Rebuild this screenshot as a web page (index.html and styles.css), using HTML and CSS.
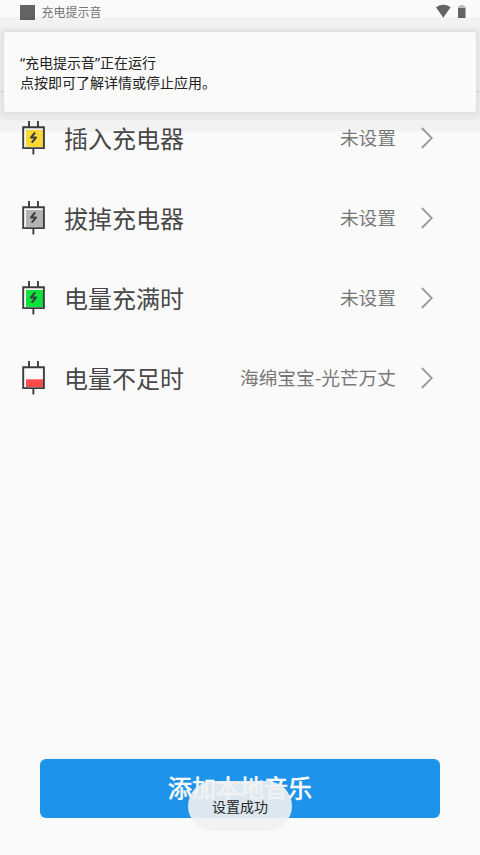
FILE: index.html
```
<!DOCTYPE html>
<html lang="zh-CN">
<head>
<meta charset="utf-8">
<title>充电提示音</title>
<link rel="stylesheet" href="styles.css">
</head>
<body>
<svg width="0" height="0" class="defs">
  <symbol id="plug" viewBox="0 0 24 34">
    <path d="M7 0V6M16 0V6M11.400 27V33.500M1.200 6.200H21.900V27.100H1.200Z" fill="none" stroke="#3d3d3f" stroke-width="1.900"/>
  </symbol>
  <symbol id="bolt" viewBox="0 0 24 34">
    <path d="M13.100 11.500L8.900 16.600H14L9.700 21.700" fill="none" stroke="#3d3d3f" stroke-width="2" stroke-linejoin="round"/>
  </symbol>
  <symbol id="chevron" viewBox="0 0 12 22">
    <path d="M0.800 1L10.800 11L0.800 21" fill="none" stroke="#9a9a9a" stroke-width="1.800"/>
  </symbol>
</svg>
<div class="screen">
  <header class="status">
    <span class="app-mark"></span>
    <span class="app-name">充电提示音</span>
    <svg class="status-icons" width="32" height="16" viewBox="0 0 32 16">
      <path d="M1 3.200Q8.300-1.600 15.600 3.200L8.300 13.700Z" fill="#636363"/>
      <path d="M25.300 1H28.700V2H30.500V5H23V2H25.300Z" fill="#bdbdbd"/>
      <path d="M23 4H30.500V14H23Z" fill="#636363"/>
    </svg>
  </header>
  <div class="toolbar"></div>
  <main class="list">
    <div class="row">
      <svg class="icon" width="24" height="34"><path d="M4 9H21V26H4Z" fill="#fdd835"/><use href="#plug"/><use href="#bolt"/></svg>
      <span class="label">插入充电器</span><span class="value">未设置</span>
      <svg class="arrow" width="12" height="22"><use href="#chevron"/></svg>
    </div>
    <div class="row">
      <svg class="icon" width="24" height="34"><path d="M4 9H21V26H4Z" fill="#b3b3b3"/><use href="#plug"/><use href="#bolt"/></svg>
      <span class="label">拔掉充电器</span><span class="value">未设置</span>
      <svg class="arrow" width="12" height="22"><use href="#chevron"/></svg>
    </div>
    <div class="row">
      <svg class="icon" width="24" height="34"><path d="M4 9H21V26H4Z" fill="#0be23c"/><use href="#plug"/><use href="#bolt"/></svg>
      <span class="label">电量充满时</span><span class="value">未设置</span>
      <svg class="arrow" width="12" height="22"><use href="#chevron"/></svg>
    </div>
    <div class="row">
      <svg class="icon" width="24" height="34"><path d="M4 18.300H21V26H4Z" fill="#ff4b4b"/><use href="#plug"/></svg>
      <span class="label">电量不足时</span><span class="value">海绵宝宝-光芒万丈</span>
      <svg class="arrow" width="12" height="22"><use href="#chevron"/></svg>
    </div>
  </main>
  <button class="add">添加本地音乐</button>
  <section class="notice">
    <p><span class="quote">“</span>充电提示音<span class="quote">”</span>正在运行</p>
    <p>点按即可了解详情或停止应用。</p>
  </section>
  <div class="toast">设置成功</div>
</div>
</body>
</html>
```
FILE: styles.css
```
* { box-sizing: border-box; }
body {
  margin: 0;
  background: #fafafa;
  font-family: "Noto Sans CJK SC", sans-serif;
}
.defs { position: absolute; }
.screen {
  position: relative;
  display: flex;
  flex-direction: column;
  height: 855px;
  overflow: hidden;
}
.status {
  display: flex;
  align-items: center;
  height: 24px;
  padding: 0 13px 0 20px;
}
.app-mark {
  width: 15px;
  height: 15px;
  margin-top: 1px;
  background: #636363;
}
.app-name {
  margin-left: 6.500px;
  font-size: 12px;
  line-height: 24px;
  color: #737373;
}
.status-icons { margin-left: auto; }
.toolbar {
  height: 68px;
  border-bottom: 1px solid #e0e0e0;
}
.list {
  flex: 1;
  padding: 6px 47px 0 22px;
}
.row {
  display: flex;
  align-items: center;
  height: 80px;
}
.icon { flex: none; }
.label {
  margin-left: 18px;
  font-size: 24px;
  line-height: 36px;
  color: #484848;
}
.value {
  margin-left: auto;
  padding-bottom: 2px;
  font-size: 18.700px;
  line-height: 28px;
  color: #777;
}
.arrow { margin-left: 25px; }
.add {
  height: 59px;
  margin: 0 40px 37px;
  padding: 0 0 4px;
  border: 0;
  border-radius: 6px;
  background: #1e93eb;
  color: #fafafa;
  font: 400 24px/55px "Noto Sans CJK SC", sans-serif;
  -webkit-text-stroke: 0.700px #fafafa;
}
.notice {
  position: absolute;
  top: 32px;
  left: 4px;
  width: 472px;
  height: 79.500px;
  padding: 20px 16px;
  border-radius: 2px;
  background: #fafafa;
  box-shadow:
    0 0.500px 0 2.500px rgba(0, 0, 0, 0.030),
    0 1.500px 0 6.500px rgba(0, 0, 0, 0.030),
    0 2.300px 0 17.300px rgba(0, 0, 0, 0.032);
}
.notice p {
  height: 20px;
  margin: 0;
  font-size: 14px;
  line-height: 20px;
  color: #212121;
}
.quote {
  font-family: "Noto Sans", sans-serif;
  line-height: 1;
}
.toast {
  position: absolute;
  top: 781px;
  left: 188px;
  width: 104px;
  height: 50px;
  border-radius: 25px;
  background: rgba(241, 241, 241, 0.900);
  font-size: 14px;
  line-height: 50px;
  text-align: center;
  color: #252525;
}
```
